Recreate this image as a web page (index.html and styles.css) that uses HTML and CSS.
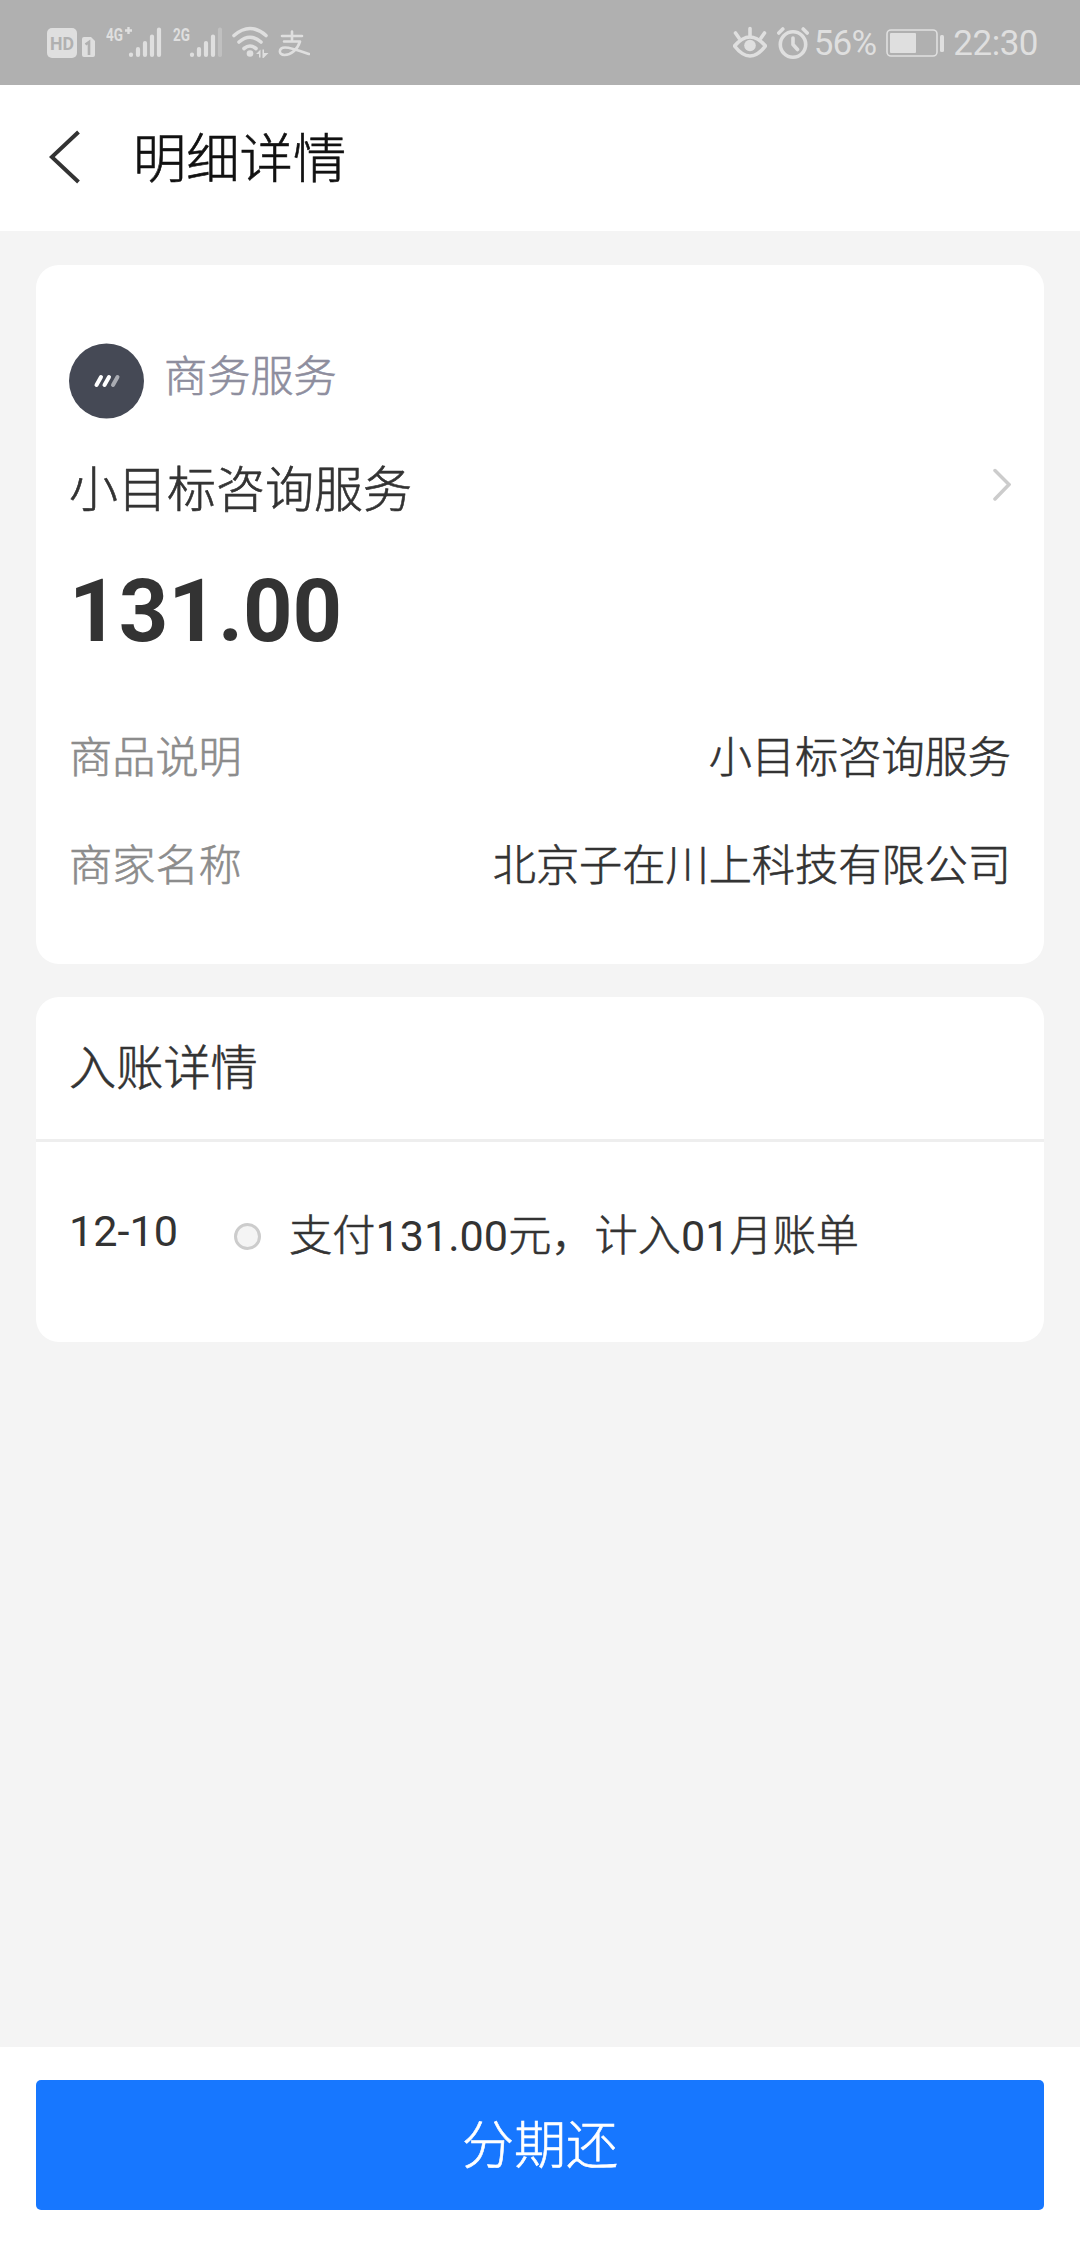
FILE: index.html
```
<!DOCTYPE html>
<html lang="zh-CN">
<head>
  <meta charset="UTF-8">
  <meta name="viewport" content="width=device-width, initial-scale=1.0">
  <title>明细详情</title>
  <link rel="stylesheet" href="styles.css">
</head>
<body>
  <div class="status-bar">
    <div class="status-left">
      <svg class="icon-hd" width="50" height="40" viewBox="0 0 50 40">
        <rect x="0" y="6" width="30" height="30" rx="5" />
        <text class="hd-text" x="15" y="28" textLength="24" lengthAdjust="spacingAndGlyphs">HD</text>
        <path d="M38 15h6l4 4v14a2 2 0 0 1-2 2H37a2 2 0 0 1-2-2V17a2 2 0 0 1 2-2z" />
        <path class="cut" d="M38.500 22.500l3.500-2.500v13" />
      </svg>
      <svg class="icon-signal" width="58" height="40" viewBox="0 0 58 40">
        <text class="net-text" x="0" y="19" textLength="17" lengthAdjust="spacingAndGlyphs">4G</text>
        <path class="line thin" d="M19 8.500h7M22.500 5v7" />
        <path class="line bars" d="M25 32.500v.5M32 27v6M39 21v12M46 14.500v18.500M53 7.500v25.500" />
      </svg>
      <svg class="icon-signal2" width="51" height="40" viewBox="0 0 51 40">
        <text class="net-text" x="0" y="19" textLength="17" lengthAdjust="spacingAndGlyphs">2G</text>
        <path class="line bars" d="M19 32.500v.5M26 27v6M33 21v12M40 14.500v18.500" />
        <path class="line bars faint" d="M47 7.500v25.500" />
      </svg>
      <svg class="icon-wifi" width="38" height="40" viewBox="0 0 38 40">
        <path class="line" d="M2 13.500q16-14 32 0M7 20q11-9.500 22 0M12 26.500q6-5 12 0" />
        <circle cx="18" cy="31.500" r="3.300" />
        <path d="M24 32l4.500-4.500v8H27v-3.500zM30.500 27.500H32v3.500h4.500l-5 5h-1z" />
      </svg>
      <svg class="icon-pay" width="32" height="40" viewBox="0 0 32 40">
        <path class="line pay" d="M4 14h20M14 9.500v10M6 19.500h16C19.500 27.500 13 33 6.500 33 0 33 .5 25.500 7 25.500c6 0 14 3 24 6.500" />
      </svg>
    </div>
    <div class="status-right">
      <svg class="icon-eye" width="34" height="40" viewBox="0 0 34 40">
        <path class="line" d="M1.500 24q15.500-18 31 0q-15.500 20-31 0z" />
        <circle cx="17" cy="23.500" r="5.800" />
        <path class="line" d="M17 6.500v7M2.500 11l3.500 5M31.500 11l-3.500 5" />
      </svg>
      <svg class="icon-alarm" width="32" height="40" viewBox="0 0 32 40">
        <circle class="line" cx="16" cy="22.500" r="12.700" />
        <path class="line" d="M16 16v6.500l4.500 5M1.800 11l4-4M30.200 11l-4-4" />
      </svg>
      <span class="battery-text">56%</span>
      <svg class="icon-battery" width="58" height="40" viewBox="0 0 58 40">
        <rect class="line shell" x="1" y="8" width="50" height="26" rx="4" />
        <rect x="4" y="11" width="26" height="20" rx="1" />
        <rect x="54" y="13" width="4" height="17" rx="1.500" />
      </svg>
      <span class="clock">22:30</span>
    </div>
  </div>

  <header class="nav-bar">
    <svg class="back" width="32" height="54" viewBox="0 0 32 54">
      <path d="M29.500 2L2.800 27L29.500 52" />
    </svg>
    <h1>明细详情</h1>
  </header>

  <main>
    <section class="card summary">
      <div class="category">
        <svg class="category-icon" width="75" height="76" viewBox="0 0 75 76">
          <circle cx="37.500" cy="38" r="37.500" />
          <path d="M27.500 42l4.500-8M35.500 42l4.500-8" />
          <path class="dim" d="M44 42l4.500-8" />
        </svg>
        <span>商务服务</span>
      </div>
      <div class="merchant">
        <span>小目标咨询服务</span>
        <svg class="arrow" width="20" height="34" viewBox="0 0 20 34">
          <path d="M4 2.500l14 14L4 31" />
        </svg>
      </div>
      <div class="amount">131.00</div>
      <div class="row">
        <span class="label">商品说明</span>
        <span class="value">小目标咨询服务</span>
      </div>
      <div class="row">
        <span class="label">商家名称</span>
        <span class="value">北京子在川上科技有限公司</span>
      </div>
    </section>

    <section class="card detail">
      <h2>入账详情</h2>
      <div class="entry">
        <span class="date">12-10</span>
        <span class="dot"></span>
        <span class="entry-text">支付<span class="num">131.00</span>元，计入<span class="num">01</span>月账单</span>
      </div>
    </section>
  </main>

  <footer>
    <button class="pay-btn">分期还</button>
  </footer>
</body>
</html>
```
FILE: styles.css
```
:root {
  --page-bg: #f4f4f4;
  --status-bg: #b0b0b0;
  --status-fg: #dfdfdf;
  --text: #333;
  --muted: #8c8c8c;
  --blue: #1777ff;
}

* { margin: 0; padding: 0; box-sizing: border-box; }

body {
  font-family: Roboto, "Noto Sans CJK SC", sans-serif;
  font-size: 43.200px;
  font-weight: 300;
  color: var(--text);
  background: var(--page-bg);
  height: 2244px;
  display: flex;
  flex-direction: column;
  -webkit-text-stroke: 0.6px;
}

svg { display: block; flex: none; }

/* status bar */
.status-bar {
  height: 85px;
  padding: 22px 42px 0 47px;
  background: var(--status-bg);
  color: var(--status-fg);
  display: flex;
  justify-content: space-between;
  font-size: 35px;
  font-weight: 400;
  line-height: 44px;
  -webkit-text-stroke: 0;
}
.status-left, .status-right { display: flex; align-items: flex-start; }
.status-bar svg { fill: var(--status-fg); }
.status-bar .line {
  fill: none;
  stroke: var(--status-fg);
  stroke-width: 3.6;
  stroke-linecap: round;
  stroke-linejoin: round;
}
.status-bar .bars { stroke-width: 4.2; }
.status-bar .thin { stroke-width: 2.4; stroke-linecap: butt; }
.status-bar .shell { stroke-width: 1.6; }
.status-bar .pay { stroke-width: 2.6; }
.status-bar .faint { opacity: 0.35; }
.status-bar .cut { fill: none; stroke: var(--status-bg); stroke-width: 2.6; }
.hd-text {
  font: 700 19px Roboto, sans-serif;
  fill: var(--status-bg);
  text-anchor: middle;
}
.net-text { font: 700 19px Roboto, sans-serif; }
.icon-signal { margin-left: 9px; }
.icon-signal2 { margin-left: 9px; }
.icon-wifi { margin-left: 8px; }
.icon-pay { margin-left: 8px; }
.icon-alarm { margin-left: 10px; }
.battery-text { margin-left: 5px; letter-spacing: -0.8px; }
.icon-battery { margin-left: 10px; }
.clock { margin-left: 9px; letter-spacing: -0.5px; }

/* title */
.nav-bar {
  height: 146px;
  padding-left: 49px;
  background: #fff;
  display: flex;
  align-items: center;
}
.back { margin-bottom: 3px; }
.back path { fill: none; stroke: #333; stroke-width: 4; }
.nav-bar h1 {
  margin: 3px 0 0 52px;
  font-size: 53.300px;
  font-weight: 300;
  line-height: 70px;
  color: #111;
}

main { flex: 1; padding: 34px 36px 0; }

.card {
  background: #fff;
  border-radius: 23px;
}
.summary { height: 699px; padding: 78px 33px 0; }
.category {
  display: flex;
  align-items: center;
  height: 76px;
  gap: 20px;
  color: #8e8e9e;
}
.category span { line-height: 60px; margin-bottom: 6px; }
.category-icon circle { fill: #454955; }
.category-icon path {
  fill: none;
  stroke: #fff;
  stroke-width: 4;
  stroke-linecap: round;
}
.category-icon .dim { stroke: #a9abb2; }
.merchant {
  display: flex;
  justify-content: space-between;
  align-items: center;
  height: 70px;
  margin-top: 31px;
  font-size: 49px;
}
.arrow path {
  fill: none;
  stroke: #ccc;
  stroke-width: 3.5;
  stroke-linecap: round;
}
.amount {
  margin-top: 42px;
  height: 100px;
  font-size: 86.500px;
  font-weight: 700;
  line-height: 100px;
  -webkit-text-stroke: 0;
}
.row {
  display: flex;
  justify-content: space-between;
  height: 60px;
  line-height: 60px;
  margin-top: 48px;
}
.amount + .row { margin-top: 67px; }
.label { color: var(--muted); }

.detail { height: 345px; margin-top: 33px; }
.detail h2 {
  height: 145px;
  padding-left: 33px;
  font-size: 47.200px;
  font-weight: 300;
  line-height: 144px;
  border-bottom: 3px solid #eee;
}
.entry {
  display: flex;
  align-items: center;
  height: 60px;
  margin-top: 64px;
  padding-left: 33px;
}
.date {
  width: 165px;
  margin-bottom: 10px;
  font-weight: 400;
  -webkit-text-stroke: 0;
}
.dot {
  width: 27px;
  height: 27px;
  border: 3px solid #ccc;
  border-radius: 50%;
  background: #f4f4f4;
}
.entry-text { margin: 0 0 9px 28px; }
.num { font-weight: 400; -webkit-text-stroke: 0; }

/* bottom action */
footer {
  height: 197px;
  padding: 33px 36px 0;
  background: #fff;
}
.pay-btn {
  width: 100%;
  height: 130px;
  padding-bottom: 8px;
  border: none;
  border-radius: 5px;
  background: var(--blue);
  color: #fff;
  font: inherit;
  font-size: 52px;
  -webkit-text-stroke: 0.6px;
  cursor: pointer;
}
```
